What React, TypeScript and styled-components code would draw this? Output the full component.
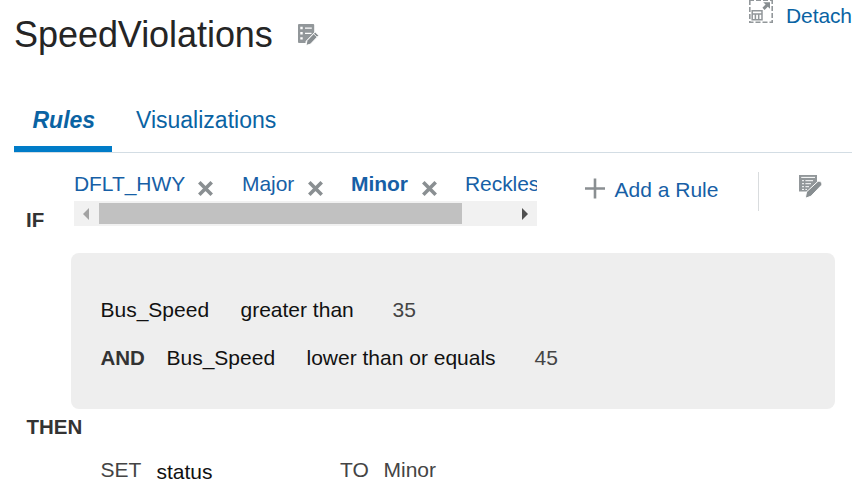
import React from "react";
import styled, { createGlobalStyle } from "styled-components";

const GlobalStyle = createGlobalStyle`
  * { box-sizing: border-box; }
  html, body { margin: 0; background: #fff; overflow: hidden; }
  body { font-family: "Liberation Sans", Arial, sans-serif; font-size: 21px; line-height: 24px; color: #333; }
  svg { display: block; }
`;

const Page = styled.main`
  width: 858px;
  height: 496px;
  overflow: hidden;
  display: flex;
  flex-direction: column;
`;

const Header = styled.header`
  display: grid;
  grid-template-columns: 282px 451px 1fr;
  height: 106px;
  padding-left: 14px;
  align-items: start;
`;

const Title = styled.h1`
  margin: 14px 0 0;
  font-size: 36px;
  line-height: 42px;
  font-weight: 400;
  letter-spacing: -0.05px;
  color: #252525;
`;

const TitleIcon = styled.div`
  padding-top: 23px;
`;

const DetachLink = styled.a`
  display: flex;
  gap: 12px;
  color: #145c9e;
`;

const DetachLabel = styled.span`
  padding-top: 4px;
  letter-spacing: -0.1px;
  color: #0a63a3;
`;

const Tabs = styled.nav`
  display: flex;
  height: 47px;
  width: 838px;
  margin-left: 14px;
  border-bottom: 1px solid #d3dde4;
`;

const Tab = styled.a<{ $active?: boolean }>`
  height: 46px;
  padding: 0 17px 0 ${(p) => (p.$active ? "18.5px" : "24px")};
  width: ${(p) => (p.$active ? "98px" : "auto")};
  font-size: 23px;
  line-height: 28px;
  color: #0a63a3;
  font-weight: ${(p) => (p.$active ? 700 : 400)};
  font-style: ${(p) => (p.$active ? "italic" : "normal")};
  border-bottom: ${(p) => (p.$active ? "6px solid #007cc8" : "0")};
`;

const RuleBar = styled.section`
  display: grid;
  grid-template-columns: 48px 463px 47px 174px 41px 1fr;
  padding-left: 26px;
  height: 100px;
  align-items: start;
`;

const Keyword = styled.strong<{ $top?: number }>`
  margin-top: ${(p) => p.$top ?? 0}px;
  font-size: 20.5px;
  font-weight: 700;
  color: #333;
`;

const Scroller = styled.div`
  margin-top: 19px;
  overflow: hidden;
`;

const RuleList = styled.div`
  display: grid;
  grid-template-columns: 168px 109px 114px 90px;
  height: 29px;
`;

const Rule = styled.a<{ $active?: boolean; $gap?: number }>`
  display: flex;
  justify-content: space-between;
  padding-right: ${(p) => p.$gap ?? 27}px;
  color: #175fa6;
  white-space: nowrap;
  letter-spacing: -0.06px;
  font-weight: ${(p) => (p.$active ? 700 : 400)};
  svg { margin-top: 8px; }
`;

const ScrollTrack = styled.div`
  display: grid;
  grid-template-columns: 25px 363px 1fr;
  align-items: center;
  height: 25px;
  background: #f1f1f1;
`;

const ScrollThumb = styled.div`
  height: 21px;
  background: #c1c1c1;
`;

const ArrowSlot = styled.div<{ $right?: boolean }>`
  padding-left: ${(p) => (p.$right ? "60px" : "9px")};
`;

const AddIcon = styled.div`
  margin: 25px 0 0 47px;
`;

const AddRule = styled.a`
  display: flex;
  grid-column: 3 / 5;
  color: #175fa6;
  span { padding: 25px 0 0 9.5px; }
`;

const Divider = styled.div`
  grid-column: 5;
  width: 1px;
  height: 39px;
  margin-top: 19px;
  background: #d9dcde;
`;

const EditSlot = styled.div`
  margin-top: 21px;
`;

const ConditionPanel = styled.section`
  width: 764px;
  height: 156px;
  margin-left: 71px;
  padding: 45px 0 0 29.5px;
  background: #eee;
  border-radius: 8px;
`;

const Condition = styled.div<{ $columns: string }>`
  display: grid;
  grid-template-columns: ${(p) => p.$columns};
  height: 48px;
  color: #111;
  white-space: nowrap;
`;

const Value = styled.span`
  color: #444;
`;

const Then = styled.section`
  padding: 6px 0 0 26.5px;
`;

const Assignment = styled.div`
  display: grid;
  grid-template-columns: 56px 183.5px 43.5px 1fr;
  margin-top: 19px;
  padding-left: 74px;
  color: #444;
`;

const Field = styled.span`
  padding-top: 2px;
  color: #111;
`;

const CloseIcon = () => (
  <svg width="17" height="17" viewBox="0 0 17 17">
    <path d="M2.3 2.3 14.7 14.7M14.7 2.3 2.3 14.7" stroke="#8a8f92" strokeWidth="3.6" />
  </svg>
);

const FormEditIcon = () => (
  <svg width="24" height="24" viewBox="0 0 24 24">
    <path d="M3 1H17.2Q18.2 1 18.2 2V9.5L9.5 18.5V20H3Q2 20 2 19V2Q2 1 3 1Z" fill="#92979a" />
    <path d="M4.3 3.8h2.4v2.4H4.3zM4.3 9h2.4v2.4H4.3zM4.3 14.2h2.4v2.4H4.3zM9 4.5H15.8v1.2H9zM9 9.7H15.5v1.2H9z" fill="#fff" />
    <path d="m10 22.5 1-5L19.2 9l3.6 3.4-8.3 8.7z" fill="#888e91" stroke="#fff" strokeWidth="1" />
    <path d="m17.4 10.6 3.7 3.5" stroke="#fff" strokeWidth=".8" />
  </svg>
);

const NoteEditIcon = () => (
  <svg width="25" height="25" viewBox="0 0 25 25">
    <path d="M0 1H18V8L9 17.5H0Z" fill="#92979a" />
    <path d="M2.2 3.4H16M3 6.7h2M6.4 6.7H14M3 9.7h2M6.4 9.7H12M3 12.7h2M6.4 12.7H10M3 15.4h2M6.4 15.4H8" stroke="#fff" strokeWidth="1" />
    <path d="m6.3 24.3 1.2-6.4L18.8 7.5q1.2-1.1 2.5.1l1.2 1.2q1.1 1.3 0 2.4L12 22.2z" fill="#888e91" stroke="#fff" strokeWidth="1" />
  </svg>
);

const DetachIcon = () => (
  <svg width="27" height="24" viewBox="0 0 27 24">
    <path d="M2.8 0V22.3H25.2V0" fill="none" stroke="#92979a" strokeWidth="1.6" strokeDasharray="5 2" />
    <path d="M2 .5H25" stroke="#92979a" strokeDasharray="5 2" />
    <path d="M5.2 10.7h9.8v9H5.2zM5.2 13.9h9.8M8.4 13.9v5.8M11.7 13.9v5.8" fill="none" stroke="#92979a" strokeWidth="1.5" />
    <path d="M16.2 2.2h6.8v6.6l-2.2-2-3.2 3.1-2.2-2.2 3.2-3.1z" fill="#888e91" />
  </svg>
);

export default function App() {
  return (
    <>
      <GlobalStyle />
      <Page>
        <Header>
          <Title>SpeedViolations</Title>
          <TitleIcon><FormEditIcon /></TitleIcon>
          <DetachLink>
            <DetachIcon />
            <DetachLabel>Detach</DetachLabel>
          </DetachLink>
        </Header>
        <Tabs>
          <Tab $active>Rules</Tab>
          <Tab>Visualizations</Tab>
        </Tabs>
        <RuleBar>
          <Keyword $top={55}>IF</Keyword>
          <Scroller>
            <RuleList>
              <Rule $gap={28}><span>DFLT_HWY</span><CloseIcon /></Rule>
              <Rule><span>Major</span><CloseIcon /></Rule>
              <Rule $active><span>Minor</span><CloseIcon /></Rule>
              <Rule><span>Reckless</span></Rule>
            </RuleList>
            <ScrollTrack>
              <ArrowSlot>
                <svg width="6" height="12" viewBox="0 0 6 12"><path d="M6 0V12L0 6Z" fill="#a3a3a3" /></svg>
              </ArrowSlot>
              <ScrollThumb />
              <ArrowSlot $right>
                <svg width="6" height="12" viewBox="0 0 6 12"><path d="M0 0V12L6 6Z" fill="#505050" /></svg>
              </ArrowSlot>
            </ScrollTrack>
          </Scroller>
          <AddRule>
            <AddIcon>
              <svg width="21" height="21" viewBox="0 0 21 21">
                <path d="M11 .5V20.5M1 10.5H21" stroke="#8a8f92" strokeWidth="2.6" />
              </svg>
            </AddIcon>
            <span>Add a Rule</span>
          </AddRule>
          <Divider />
          <EditSlot><NoteEditIcon /></EditSlot>
        </RuleBar>
        <ConditionPanel>
          <Condition $columns="140px 152px auto">
            <span>Bus_Speed</span>
            <span>greater than</span>
            <Value>35</Value>
          </Condition>
          <Condition $columns="66px 140px 228px auto">
            <Keyword>AND</Keyword>
            <span>Bus_Speed</span>
            <span>lower than or equals</span>
            <Value>45</Value>
          </Condition>
        </ConditionPanel>
        <Then>
          <Keyword>THEN</Keyword>
          <Assignment>
            <span>SET</span>
            <Field>status</Field>
            <span>TO</span>
            <span>Minor</span>
          </Assignment>
        </Then>
      </Page>
    </>
  );
}
